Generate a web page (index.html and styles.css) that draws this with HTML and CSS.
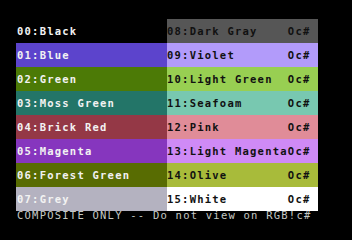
FILE: index.html
```html
<!DOCTYPE html>
<html>
<head>
<meta charset="utf-8">
<link rel="stylesheet" href="styles.css">
</head>
<body>
<div class="screen">
  <div class="grid">
    <div class="cell c0">00:Black</div>
    <div class="cell c1">01:Blue</div>
    <div class="cell c2">02:Green</div>
    <div class="cell c3">03:Moss Green</div>
    <div class="cell c4">04:Brick Red</div>
    <div class="cell c5">05:Magenta</div>
    <div class="cell c6">06:Forest Green</div>
    <div class="cell c7">07:Grey</div>
    <div class="cell dark c8">08:Dark Gray    Oc#</div>
    <div class="cell dark c9">09:Violet       Oc#</div>
    <div class="cell dark c10">10:Light Green  Oc#</div>
    <div class="cell dark c11">11:Seafoam      Oc#</div>
    <div class="cell dark c12">12:Pink         Oc#</div>
    <div class="cell dark c13">13:Light MagentaOc#</div>
    <div class="cell dark c14">14:Olive        Oc#</div>
    <div class="cell dark c15">15:White        Oc#</div>
  </div>
  <div class="footer">COMPOSITE ONLY -- Do not view on RGB!c#</div>
</div>
</body>
</html>
```

FILE: styles.css
```css
html, body {
  margin: 0;
  padding: 0;
  background: #000;
  width: 352px;
  height: 240px;
  overflow: hidden;
}
.screen {
  padding: 19px 0 0 16px;
  font-family: "DejaVu Sans Mono", "Liberation Mono", monospace;
  font-size: 10.5px;
  letter-spacing: 1.23px;
}
.grid {
  display: grid;
  grid-template-columns: 151px 151px;
  grid-template-rows: repeat(8, 24px);
  grid-auto-flow: column;
}
.cell {
  white-space: pre;
  line-height: 24px;
  font-weight: bold;
  color: #f2f2f2;
  padding-left: 1px;
}
.cell.dark {
  color: #111;
  padding-left: 0;
}
.c0 { background: #000; }
.c1 { background: #5c44cc; }
.c2 { background: #4c7a06; }
.c3 { background: #237568; }
.c4 { background: #943846; }
.c5 { background: #8636be; }
.c6 { background: #586c02; }
.c7 { background: #b4b2c0; }
.c8 { background: #565656; }
.c9 { background: #b29bfa; }
.c10 { background: #98cf52; }
.c11 { background: #78c8b0; }
.c12 { background: #e08c98; }
.c13 { background: #cf8af6; }
.c14 { background: #a8bb3a; }
.c15 { background: #ffffff; }
.footer {
  white-space: pre;
  color: #c4c8c4;
  line-height: 9px;
  padding-left: 1px;
}
```
